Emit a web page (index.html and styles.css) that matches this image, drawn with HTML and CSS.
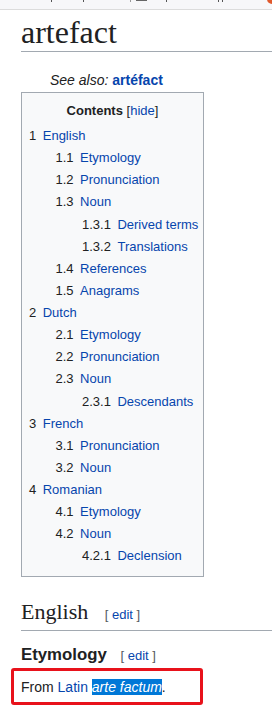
FILE: index.html
```html
<!DOCTYPE html>
<html lang="en">
<head>
    <meta charset="UTF-8">
    <meta name="viewport" content="width=device-width, initial-scale=1.0">
    <title>artefact - Wiktionary</title>
    <link rel="stylesheet" href="styles.css">
</head>
<body>
    <div class="topbar">
        <span class="mark m1"></span>
        <span class="mark m2"></span>
        <span class="mark m3"></span>
        <span class="mark wide"></span>
        <span class="mark m4"></span>
        <span class="mark m5"></span>
        <span class="mark m6"></span>
        <span class="dot"></span>
    </div>

    <div class="content">
        <h1 class="page-title">artefact</h1>

        <div class="see-also"><i>See also:</i> <a href="#"><b>artéfact</b></a></div>

        <div class="toc">
            <div class="toc-title"><b>Contents</b> <span class="toggle">[<a href="#">hide</a>]</span></div>
            <ul>
                <li><span class="num">1</span><a href="#">English</a>
                    <ul>
                        <li><span class="num">1.1</span><a href="#">Etymology</a></li>
                        <li><span class="num">1.2</span><a href="#">Pronunciation</a></li>
                        <li><span class="num">1.3</span><a href="#">Noun</a>
                            <ul>
                                <li><span class="num">1.3.1</span><a href="#">Derived terms</a></li>
                                <li><span class="num">1.3.2</span><a href="#">Translations</a></li>
                            </ul>
                        </li>
                        <li><span class="num">1.4</span><a href="#">References</a></li>
                        <li><span class="num">1.5</span><a href="#">Anagrams</a></li>
                    </ul>
                </li>
                <li><span class="num">2</span><a href="#">Dutch</a>
                    <ul>
                        <li><span class="num">2.1</span><a href="#">Etymology</a></li>
                        <li><span class="num">2.2</span><a href="#">Pronunciation</a></li>
                        <li><span class="num">2.3</span><a href="#">Noun</a>
                            <ul>
                                <li><span class="num">2.3.1</span><a href="#">Descendants</a></li>
                            </ul>
                        </li>
                    </ul>
                </li>
                <li><span class="num">3</span><a href="#">French</a>
                    <ul>
                        <li><span class="num">3.1</span><a href="#">Pronunciation</a></li>
                        <li><span class="num">3.2</span><a href="#">Noun</a></li>
                    </ul>
                </li>
                <li><span class="num">4</span><a href="#">Romanian</a>
                    <ul>
                        <li><span class="num">4.1</span><a href="#">Etymology</a></li>
                        <li><span class="num">4.2</span><a href="#">Noun</a>
                            <ul>
                                <li><span class="num">4.2.1</span><a href="#">Declension</a></li>
                            </ul>
                        </li>
                    </ul>
                </li>
            </ul>
        </div>

        <h2 class="lang-heading">English <span class="editsection">[ <a href="#">edit</a> ]</span></h2>

        <h3 class="sub-heading">Etymology <span class="editsection">[ <a href="#">edit</a> ]</span></h3>

        <div class="marked">
            <p>From <a href="#">Latin</a> <span class="selected">arte factum</span>.</p>
        </div>
    </div>
</body>
</html>
```

FILE: styles.css
```css
body {
    font-family: "Liberation Sans", Arial, sans-serif;
    font-size: 14px;
    color: #202122;
    background-color: #fff;
    margin: 0;
    padding: 0;
}
a {
    color: #0645ad;
    text-decoration: none;
}

/* cut-off browser strip at the top */
.topbar {
    height: 9px;
    background-color: #f7f7f9;
    border-bottom: 1px solid #dcdcdc;
    display: flex;
    align-items: flex-start;
    overflow: hidden;
}
.mark {
    width: 1px;
    height: 2px;
    background-color: #555;
}
.m1 { margin-left: 51px; }
.m2 { margin-left: 31px; }
.m3 { margin-left: 46px; background-color: #999; }
.mark.wide { margin-left: 5px; width: 11px; height: 1px; background-color: #666; }
.m4 { margin-left: 19px; }
.m5 { margin-left: 51px; }
.m6 { margin-left: 3px; }
.dot {
    margin-left: auto;
    margin-right: -5px;
    margin-top: -6px;
    width: 10px;
    height: 10px;
    border-radius: 50%;
    background-color: #e0582c;
}

.content {
    padding-left: 21px;
}
.page-title {
    font-family: "Liberation Serif", "Times New Roman", serif;
    font-weight: normal;
    font-size: 32px;
    line-height: 38px;
    margin: 3px 0 0 0;
    border-bottom: 1px solid #a2a9b1;
}
.see-also {
    line-height: 20px;
    margin: 18px 0 2px 0;
    padding-left: 29px;
}

.toc {
    width: 167px;
    padding: 7px 7px 8px 7px;
    background-color: #f8f9fa;
    border: 1px solid #a2a9b1;
    font-size: 13px;
}
.toc-title {
    text-align: center;
    line-height: 21px;
    margin-bottom: 4px;
}
.toc ul {
    list-style: none;
    margin: 0;
    padding: 0;
}
.toc ul ul {
    padding-left: 26.5px;
}
.toc li {
    line-height: 22.13px;
    white-space: nowrap;
}
.num {
    padding-right: 6.5px;
    color: #202122;
}

.lang-heading {
    font-family: "Liberation Serif", "Times New Roman", serif;
    font-weight: normal;
    font-size: 22px;
    line-height: 28px;
    margin: 21px 0 0 0;
    padding-bottom: 1px;
    border-bottom: 1px solid #a2a9b1;
}
.editsection {
    font-family: "Liberation Sans", Arial, sans-serif;
    font-size: 13px;
    font-weight: normal;
    color: #54595d;
    margin-left: 11px;
}
.sub-heading {
    font-size: 16.8px;
    line-height: 22px;
    margin: 13px 0 0 0;
}
.sub-heading .editsection {
    margin-left: 9px;
}

.marked {
    width: 176px;
    margin: 1px 0 0 -10px;
    padding: 6px 3px 5px 7px;
    border: 3px solid #e8121b;
    border-radius: 3px;
}
.marked p {
    margin: 0;
    line-height: 20px;
}
.selected {
    font-style: italic;
    color: #fff;
    background-color: #0078d7;
}
```
